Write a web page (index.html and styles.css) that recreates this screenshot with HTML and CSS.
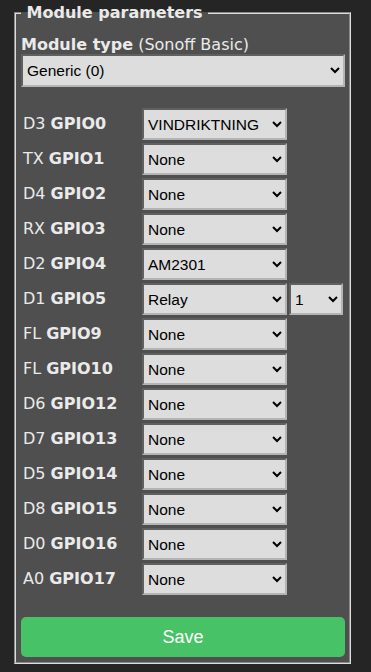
FILE: index.html
```html
<!DOCTYPE html>
<html lang="en">
<head>
    <meta charset="UTF-8">
    <meta name="viewport" content="width=device-width, initial-scale=1.0">
    <title>Configure Module</title>
    <link rel="stylesheet" href="styles.css">
</head>
<body>
    <form class="module-form">
        <fieldset class="panel">
            <legend class="panel-title">&nbsp;Module parameters&nbsp;</legend>

            <p class="type-label"><b>Module type</b> (Sonoff Basic)</p>
            <select class="field type-select">
                <option>Generic (0)</option>
            </select>

            <div class="gpio-grid">
                <div class="gpio-label">D3 <b>GPIO0</b></div>
                <select class="field"><option>VINDRIKTNING</option></select>
                <span></span>

                <div class="gpio-label">TX <b>GPIO1</b></div>
                <select class="field"><option>None</option></select>
                <span></span>

                <div class="gpio-label">D4 <b>GPIO2</b></div>
                <select class="field"><option>None</option></select>
                <span></span>

                <div class="gpio-label">RX <b>GPIO3</b></div>
                <select class="field"><option>None</option></select>
                <span></span>

                <div class="gpio-label">D2 <b>GPIO4</b></div>
                <select class="field"><option>AM2301</option></select>
                <span></span>

                <div class="gpio-label">D1 <b>GPIO5</b></div>
                <select class="field"><option>Relay</option></select>
                <select class="field"><option>1</option></select>

                <div class="gpio-label">FL <b>GPIO9</b></div>
                <select class="field"><option>None</option></select>
                <span></span>

                <div class="gpio-label">FL <b>GPIO10</b></div>
                <select class="field"><option>None</option></select>
                <span></span>

                <div class="gpio-label">D6 <b>GPIO12</b></div>
                <select class="field"><option>None</option></select>
                <span></span>

                <div class="gpio-label">D7 <b>GPIO13</b></div>
                <select class="field"><option>None</option></select>
                <span></span>

                <div class="gpio-label">D5 <b>GPIO14</b></div>
                <select class="field"><option>None</option></select>
                <span></span>

                <div class="gpio-label">D8 <b>GPIO15</b></div>
                <select class="field"><option>None</option></select>
                <span></span>

                <div class="gpio-label">D0 <b>GPIO16</b></div>
                <select class="field"><option>None</option></select>
                <span></span>

                <div class="gpio-label">A0 <b>GPIO17</b></div>
                <select class="field"><option>None</option></select>
                <span></span>
            </div>

            <button type="submit" class="save-btn">Save</button>
        </fieldset>
    </form>
</body>
</html>
```

FILE: styles.css
```css
body {
    margin: 0;
    padding-top: 3px;
    background-color: #252525;
    color: #eaeaea;
    font-family: "DejaVu Sans", Verdana, sans-serif;
    font-size: 16px;
}
.module-form {
    margin: 0;
}
.panel {
    box-sizing: border-box;
    width: 337px;
    margin: 0 0 0 14px;
    padding: 0 4px 5px 5px;
    border: 2px groove #dddddd;
    background-color: #4f4f4f;
    min-width: 0;
}
.panel-title {
    padding: 0;
    font-weight: bold;
    color: #eaeaea;
}
.type-label {
    margin: 13px 0 0 0;
}
.field {
    box-sizing: border-box;
    height: 32px;
    padding: 0;
    border: 2px inset #b4b4b4;
    border-radius: 0;
    background-color: #dddddd;
    color: #000000;
    font-family: "Liberation Sans", Arial, sans-serif;
    font-size: 15.5px;
}
.type-select {
    display: block;
    width: 100%;
    height: 33px;
}
.gpio-grid {
    display: grid;
    grid-template-columns: 117px 145px 54px;
    grid-auto-rows: 32px;
    column-gap: 2px;
    row-gap: 3px;
    margin-top: 21px;
    padding-left: 2px;
}
.gpio-grid .field {
    width: 100%;
}
.gpio-label {
    line-height: 32px;
    white-space: nowrap;
}
.save-btn {
    display: block;
    width: 100%;
    height: 40px;
    margin-top: 22px;
    border: none;
    border-radius: 5px;
    background-color: #47c266;
    color: #ffffff;
    font-family: "Liberation Sans", Arial, sans-serif;
    font-size: 18px;
    cursor: pointer;
}
.save-btn:hover {
    background-color: #5aaf6f;
}
```
